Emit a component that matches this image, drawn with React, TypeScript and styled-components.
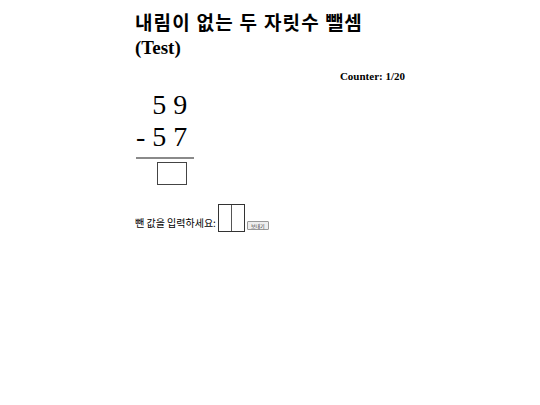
import React, { FC } from 'react'
import styled, { createGlobalStyle } from 'styled-components'

const GlobalStyle = createGlobalStyle`
  body {
    margin: 0;
    background: #fff;
    font-family: "Liberation Serif", "Noto Sans CJK KR", serif;
    color: #000;
  }
`

const Page = styled.div`
  width: 270px;
  margin: 0 auto;
  padding-top: 12px;
`

const Title = styled.h2`
  margin: 0;
  font-size: 19px;
  line-height: 24px;
  font-weight: 700;
`

const TitleKo = styled.span`
  letter-spacing: 1.1px;
`

const Counter = styled.div`
  margin-top: 10px;
  text-align: right;
  font-size: 11px;
  font-weight: 700;
`

const Problem = styled.div`
  display: inline-flex;
  flex-direction: column;
  align-items: flex-end;
  margin-top: 7px;
  margin-left: 1px;
`

const Operand = styled.div`
  font-size: 28px;
  line-height: 32px;
  white-space: pre;
`

const Rule = styled.div`
  align-self: stretch;
  height: 2px;
  margin-top: 4px;
  margin-right: -7px;
  background: #8a8a8a;
`

const AnswerBox = styled.div`
  width: 28px;
  height: 21px;
  margin-top: 3px;
  border: 1px solid #444;
`

const AnswerRow = styled.div`
  display: flex;
  align-items: flex-end;
  margin-top: 19px;
  font-family: "Noto Sans CJK KR", "Liberation Sans", sans-serif;
  font-size: 10px;
`

const Label = styled.span`
  margin-bottom: 2px;
  margin-right: 2px;
`

const Digits = styled.div`
  display: flex;
  border: 1px solid #333;
  height: 26px;
`

const DigitInput = styled.input<{ $first?: boolean }>`
  width: 12px;
  height: 26px;
  padding: 0;
  border: none;
  border-left: ${p => (p.$first ? 'none' : '1px solid #555')};
  outline: none;
  background: #fff;
`

const SendButton = styled.button`
  margin-left: 2px;
  margin-bottom: 2px;
  height: 9px;
  padding: 0 3px;
  font-family: "Noto Sans CJK KR", sans-serif;
  font-size: 5px;
  line-height: 7px;
  border: 1px solid #999;
  border-radius: 1px;
  background: #eee;
  color: #333;
`

const App: FC = () => {
  return (
    <>
      <GlobalStyle />
      <Page>
        <Title>
          <TitleKo>내림이 없는 두 자릿수 뺄셈</TitleKo>
          <br />
          (Test)
        </Title>
        <Counter>Counter: 1/20</Counter>
        <Problem>
          <Operand>5 9</Operand>
          <Operand>- 5 7</Operand>
          <Rule />
          <AnswerBox />
        </Problem>
        <AnswerRow>
          <Label>뺀 값을 입력하세요:</Label>
          <Digits>
            <DigitInput $first />
            <DigitInput />
          </Digits>
          <SendButton>보내기</SendButton>
        </AnswerRow>
      </Page>
    </>
  )
}

export default App
